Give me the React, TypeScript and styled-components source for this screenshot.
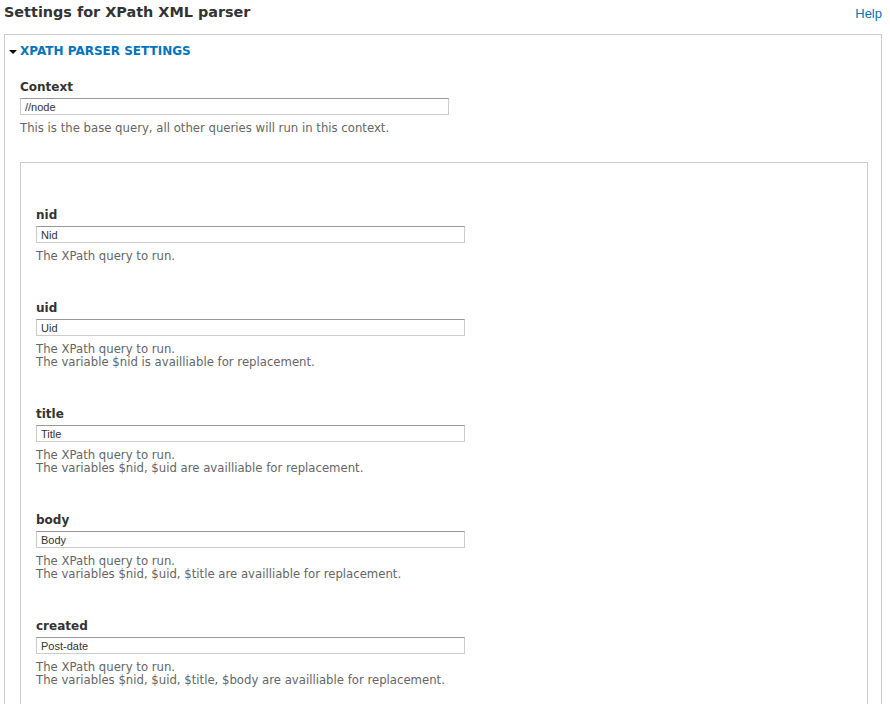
import React from "react";
import styled, { createGlobalStyle } from "styled-components";

const Global = createGlobalStyle`
  html, body { margin: 0; padding: 0; background: #fff; }
  body { font-family: "DejaVu Sans", "Lucida Grande", sans-serif; color: #333; }
`;

const Page = styled.div`
  padding: 0 8px 0 4px;
  width: 890px;
  box-sizing: border-box;
`;

const Header = styled.div`
  display: flex;
  justify-content: space-between;
  align-items: flex-start;
  height: 34px;
`;

const Title = styled.h1`
  margin: 3px 0 0 0;
  font-size: 14.4px;
  font-weight: bold;
  color: #333;
  line-height: 18px;
`;

const HelpLink = styled.a`
  font-family: "Liberation Sans", Arial, sans-serif;
  font-size: 13px;
  color: #0074bd;
  text-decoration: none;
  margin-top: 6px;
`;

const Fieldset = styled.div<{ $inner?: boolean }>`
  display: flex;
  flex-direction: column;
  border: 1px solid #ccc;
  border-bottom: none;
  padding: ${(p) => (p.$inner ? "44px 15px 0 15px" : "8px 13px 0 15px")};
  min-height: 700px;
`;

const Legend = styled.div`
  display: flex;
  align-items: center;
  gap: 3px;
  margin-left: -11px;
  font-size: 12px;
  font-weight: bold;
  color: #0074bd;
  text-transform: uppercase;
  line-height: 16px;
`;

const Arrow = styled.span`
  width: 0;
  height: 0;
  border-left: 4px solid transparent;
  border-right: 4px solid transparent;
  border-top: 4px solid #000;
  margin-top: 1px;
`;

const Item = styled.div<{ $first?: boolean }>`
  margin-top: ${(p) => (p.$first ? "20px" : "0")};
  margin-bottom: ${(p) => (p.$first ? "27px" : "37px")};
`;

const Label = styled.label`
  display: block;
  font-size: 12px;
  font-weight: bold;
  color: #333;
  line-height: 16px;
  margin-bottom: 3px;
`;

const Input = styled.input`
  display: block;
  box-sizing: border-box;
  width: 429px;
  height: 17px;
  padding: 0 4px;
  border: 1px solid #ccc;
  border-top-color: #999;
  font-family: "Liberation Sans", Arial, sans-serif;
  font-size: 11px;
  color: #333;
  outline: none;
`;

const Desc = styled.div`
  margin-top: 7px;
  font-size: 11.7px;
  line-height: 13px;
  color: #666;
`;

type Field = { label: string; value: string; desc: string[] };

const fields: Field[] = [
  { label: "nid", value: "Nid", desc: ["The XPath query to run."] },
  {
    label: "uid",
    value: "Uid",
    desc: ["The XPath query to run.", "The variable $nid is availliable for replacement."],
  },
  {
    label: "title",
    value: "Title",
    desc: ["The XPath query to run.", "The variables $nid, $uid are availliable for replacement."],
  },
  {
    label: "body",
    value: "Body",
    desc: ["The XPath query to run.", "The variables $nid, $uid, $title are availliable for replacement."],
  },
  {
    label: "created",
    value: "Post-date",
    desc: [
      "The XPath query to run.",
      "The variables $nid, $uid, $title, $body are availliable for replacement.",
    ],
  },
];

export default function App() {
  return (
    <Page>
      <Global />
      <Header>
        <Title>Settings for XPath XML parser</Title>
        <HelpLink href="#">Help</HelpLink>
      </Header>
      <Fieldset>
        <Legend>
          <Arrow />
          XPath parser settings
        </Legend>
        <Item $first>
          <Label>Context</Label>
          <Input defaultValue="//node" />
          <Desc>This is the base query, all other queries will run in this context.</Desc>
        </Item>
        <Fieldset $inner>
          {fields.map((f) => (
            <Item key={f.label}>
              <Label>{f.label}</Label>
              <Input defaultValue={f.value} />
              <Desc>
                {f.desc.map((d, i) => (
                  <div key={i}>{d}</div>
                ))}
              </Desc>
            </Item>
          ))}
        </Fieldset>
      </Fieldset>
    </Page>
  );
}
